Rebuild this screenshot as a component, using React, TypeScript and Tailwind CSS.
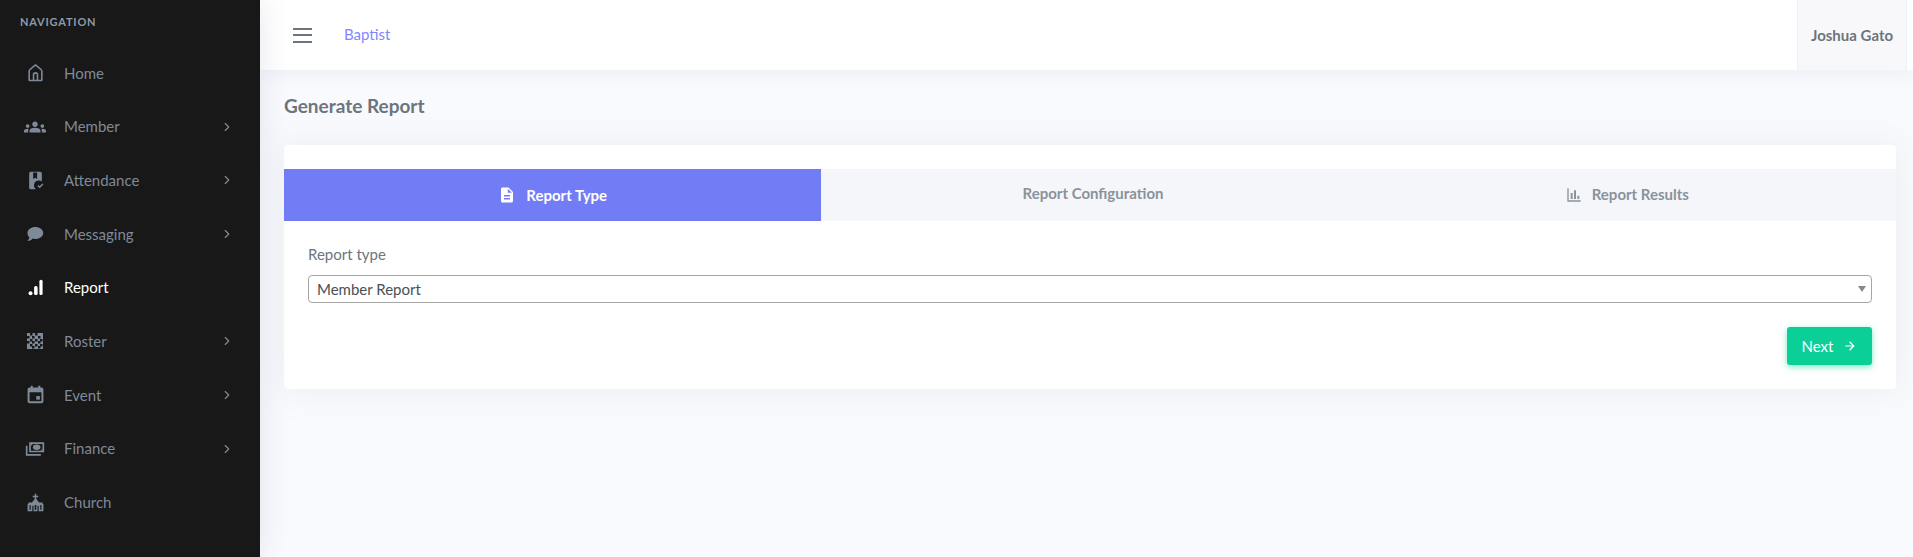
import { ChevronRight } from "lucide-react";
import { MdArrowForward, MdDescription, MdGroups } from "react-icons/md";
import type { ReactNode } from "react";

const Home = () => (
  <svg viewBox="0 0 24 24" className="w-[19px] h-[19px]" fill="none" stroke="currentColor" strokeWidth="2" strokeLinejoin="round">
    <path d="M4 21.500V10.500c0-1 .4-1.700 1.100-2.300L12 2.500l6.900 5.700c.7.600 1.100 1.300 1.100 2.300v11a.5.5 0 0 1-.5.500h-15a.5.5 0 0 1-.5-.500z" />
    <path d="M9.500 21.500v-6.500a2.500 2.500 0 0 1 5 0v6.500" />
  </svg>
);

const Book = () => (
  <svg viewBox="0 0 24 24" className="w-[19px] h-[19px]" fill="currentColor">
    <path d="M6 1h12a2 2 0 0 1 2 2v10.200a6 6 0 0 0-7.600 9.800H6a2 2 0 0 1-2-2V3a2 2 0 0 1 2-2zm3 1v8l2.500-1.600L14 10V2H9z" />
    <path d="M14.500 19l1.300-1.300 1.500 1.500 3.400-3.400 1.300 1.300-4.700 4.700z" />
  </svg>
);

const Bubble = () => (
  <svg viewBox="0 0 24 24" className="w-[18px] h-[18px]" fill="currentColor">
    <path d="M12.500 2.500C18 2.500 23 6 23 10.500s-5 8-10.500 8c-1.200 0-2.300-.2-3.400-.5C7.500 19.700 4 21.500 2 21.200c1.300-1.200 2.300-3 2.600-4.800C2.800 15 2 13 2 10.500 2 6 7 2.500 12.500 2.500z" />
  </svg>
);

const Bars = () => (
  <svg viewBox="0 0 24 24" className="w-[17px] h-[17px] -mt-[1px]" fill="currentColor">
    <circle cx="5" cy="20" r="2.800" />
    <rect x="10" y="10" width="5" height="12.500" rx="2.200" />
    <rect x="17.500" y="1" width="4.500" height="21.500" rx="2.200" />
  </svg>
);

const Checker = () => (
  <svg viewBox="0 0 16 16" className="w-[16px] h-[16px]">
    <rect width="16" height="16" fill="currentColor" />
    {[
      [3, 0], [8, 0], [0, 3], [5, 3], [11, 3], [3, 6], [8, 6], [13, 6],
      [0, 8], [5, 8], [11, 8], [3, 11], [8, 11], [13, 11], [5, 13], [11, 13],
    ].map(([x, y]) => (
      <rect key={`${x}-${y}`} x={x} y={y} width="2.500" height="2.500" fill="#181818" />
    ))}
  </svg>
);

const Calendar = () => (
  <svg viewBox="0 0 24 24" className="w-[19px] h-[19px]" fill="currentColor">
    <path fillRule="evenodd" d="M6 1h2.500v2h7V1H18v2h1.500A2.500 2.500 0 0 1 22 5.500v15a2.500 2.500 0 0 1-2.500 2.500h-15A2.500 2.500 0 0 1 2 20.500v-15A2.500 2.500 0 0 1 4.500 3H6zM4.500 9v11.500h15V9z" />
    <rect x="13" y="14" width="4.500" height="4.500" />
  </svg>
);

const Cash = () => (
  <svg viewBox="0 0 24 24" className="w-[20px] h-[20px]" fill="currentColor">
    <path fillRule="evenodd" d="M5 4h18v12H5zM7 6v8h14V6z" />
    <ellipse cx="14" cy="10" rx="4.500" ry="3.300" />
    <path d="M7 6h2.500L7 8.500zM21 14h-2.500l2.500-2.500z" />
    <path d="M1 8h2v10h16v2H1z" />
  </svg>
);

const Church = () => (
  <svg viewBox="0 0 24 24" className="w-[19px] h-[19px]" fill="currentColor">
    <path fillRule="evenodd" d="M11 1h2v2.500h2.500v2H13v2l3.500 4.500H23l-2 0v2h1v9h-6v-7h-1.500v7h-5v-7H8v7H2v-9h1v-2H1h6.500L11 7.500v-2H8.500v-2H11zM4.500 15v6H6v-6zM18 15v6h1.500v-6zM11 15v6h2v-6z" />
  </svg>
);

const ChartBar = () => (
  <svg viewBox="0 0 24 24" className="w-[16px] h-[16px]" fill="currentColor">
    <path d="M2 2h2v18h18v2H2zM7 9h3v9H7zM12 5h3v13h-3zM17 13h3v5h-3z" />
  </svg>
);

type NavItem = { label: string; icon: ReactNode; arrow?: boolean; active?: boolean };

const navItems: NavItem[] = [
  { label: "Home", icon: <Home /> },
  { label: "Member", icon: <MdGroups size={22} />, arrow: true },
  { label: "Attendance", icon: <Book />, arrow: true },
  { label: "Messaging", icon: <Bubble />, arrow: true },
  { label: "Report", icon: <Bars />, active: true },
  { label: "Roster", icon: <Checker />, arrow: true },
  { label: "Event", icon: <Calendar />, arrow: true },
  { label: "Finance", icon: <Cash />, arrow: true },
  { label: "Church", icon: <Church /> },
];

function Sidebar() {
  return (
    <aside className="relative z-20 w-[260px] h-full flex-shrink-0 bg-[#181818] shadow-[0_0_28px_rgba(50,60,110,0.12)]">
      <div className="h-[46px] pl-5 pt-[15px] text-[11px] leading-[14px] font-bold tracking-[0.8px] text-[#8e99a8]">
        NAVIGATION
      </div>
      <nav>
        {navItems.map((item) => (
          <div
            key={item.label}
            className={`h-[53.7px] flex items-center pr-[26px] ${item.active ? "text-white" : "text-[#7f8a99]"}`}
          >
            <span className="w-[70px] flex-shrink-0 flex justify-center">{item.icon}</span>
            <span className="flex-1 -ml-[6px] text-[15px]">{item.label}</span>
            {item.arrow && <ChevronRight size={14} strokeWidth={2} />}
          </div>
        ))}
      </nav>
    </aside>
  );
}

function Header() {
  return (
    <header className="relative z-10 h-[70px] flex-shrink-0 flex bg-white shadow-[0_2px_20px_rgba(50,60,110,0.07)]">
      <div className="flex items-center flex-1 pl-[33px]">
        <div className="w-[19px] flex flex-col gap-[4.500px]">
          <span className="h-[2px] bg-[#6c757d]" />
          <span className="h-[2px] bg-[#6c757d]" />
          <span className="h-[2px] bg-[#6c757d]" />
        </div>
        <a className="ml-[32px] -mt-[2px] text-[15px] text-[#7f87ff]">Baptist</a>
      </div>
      <div className="w-[110px] mr-[6px] flex items-center justify-center bg-[#f8f8fb] border-x border-[#eff0f4] text-[15px] font-bold text-[#6c757d]">
        Joshua Gato
      </div>
    </header>
  );
}

function Tabs() {
  return (
    <div className="grid grid-cols-3 h-[52px]">
      <div className="flex items-center justify-center gap-[10px] bg-[#727cf5] text-white text-[15px] font-bold">
        <MdDescription size={18} />
        Report Type
      </div>
      <div className="flex items-center justify-center pl-[6px] pb-[3px] bg-[#f5f6fa] text-[#8a929c] text-[15px] font-bold">
        Report Configuration
      </div>
      <div className="flex items-center justify-center pb-[1px] gap-[10px] bg-[#f5f6fa] text-[#8a929c] text-[15px] font-bold">
        <ChartBar />
        Report Results
      </div>
    </div>
  );
}

export default function App() {
  return (
    <div
      className="flex w-[1913px] h-[557px] overflow-hidden bg-[#f9fafd]"
      style={{ fontFamily: "Lato, sans-serif" }}
    >
      <Sidebar />
      <main className="flex-1 min-w-0 flex flex-col">
        <Header />
        <div className="pl-[24px] pr-[17px]">
          <h4 className="h-[75px] pt-[24px] text-[19px] leading-[24px] font-bold text-[#6c757d]">Generate Report</h4>
          <section className="h-[244px] pt-[24px] bg-white rounded-[4px] shadow-[0_0_35px_rgba(154,161,171,0.15)]">
            <Tabs />
            <div className="px-[24px] pt-[23px]">
              <label className="block text-[15px] leading-[20px] text-[#6c757d]">Report type</label>
              <div className="mt-[11px] h-[28px] flex items-center justify-between pl-[8px] pr-[5px] rounded-[4px] border border-[#a6a6a6] text-[15px] text-[#495057]">
                Member Report
                <span className="w-0 h-0 border-x-[4px] border-x-transparent border-t-[6px] border-t-[#888888]" />
              </div>
              <div className="mt-[24px] flex justify-end">
                <button className="h-[38px] w-[85px] flex items-center justify-center gap-[10px] rounded-[3px] bg-[#0acf97] text-white text-[15px] shadow-[0_2px_6px_rgba(10,207,151,0.5)]">
                  Next
                  <MdArrowForward size={14} />
                </button>
              </div>
            </div>
          </section>
        </div>
      </main>
    </div>
  );
}
